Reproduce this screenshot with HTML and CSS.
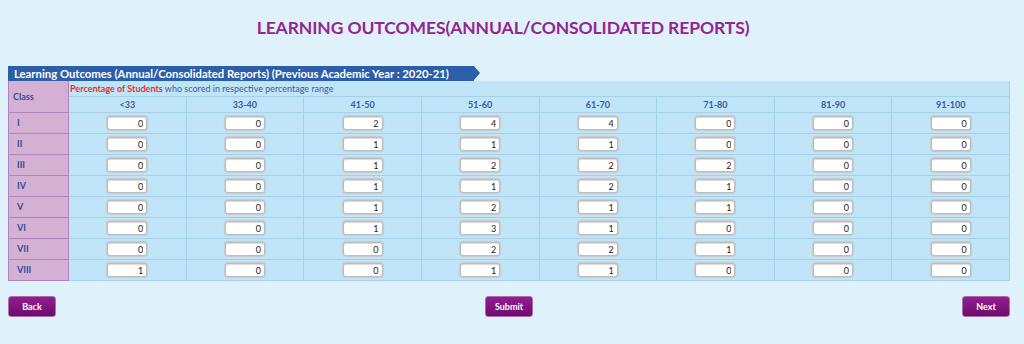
FILE: index.html
```html
<!DOCTYPE html>
<html>
<head>
<meta charset="utf-8">
<link rel="stylesheet" href="styles.css">
</head>
<body>
<div class="page">
  <h1 class="title">LEARNING OUTCOMES(ANNUAL/CONSOLIDATED REPORTS)</h1>
  <div class="ribbon"><span class="ribbon-text">Learning Outcomes (Annual/Consolidated Reports) (Previous Academic Year : 2020-21)</span></div>
  <table class="grid">
    <tr class="r-note">
      <td class="cls cls-head" rowspan="2">Class</td>
      <td class="note" colspan="8"><span class="red">Percentage of Students</span> who scored in respective percentage range</td>
    </tr>
    <tr class="r-head">
      <td>&lt;33</td><td>33-40</td><td>41-50</td><td>51-60</td><td>61-70</td><td>71-80</td><td>81-90</td><td>91-100</td>
    </tr>
    <tr><td class="cls">I</td><td><input class="num" value="0"></td><td><input class="num" value="0"></td><td><input class="num" value="2"></td><td><input class="num" value="4"></td><td><input class="num" value="4"></td><td><input class="num" value="0"></td><td><input class="num" value="0"></td><td><input class="num" value="0"></td></tr>
    <tr><td class="cls">II</td><td><input class="num" value="0"></td><td><input class="num" value="0"></td><td><input class="num" value="1"></td><td><input class="num" value="1"></td><td><input class="num" value="1"></td><td><input class="num" value="0"></td><td><input class="num" value="0"></td><td><input class="num" value="0"></td></tr>
    <tr><td class="cls">III</td><td><input class="num" value="0"></td><td><input class="num" value="0"></td><td><input class="num" value="1"></td><td><input class="num" value="2"></td><td><input class="num" value="2"></td><td><input class="num" value="2"></td><td><input class="num" value="0"></td><td><input class="num" value="0"></td></tr>
    <tr><td class="cls">IV</td><td><input class="num" value="0"></td><td><input class="num" value="0"></td><td><input class="num" value="1"></td><td><input class="num" value="1"></td><td><input class="num" value="2"></td><td><input class="num" value="1"></td><td><input class="num" value="0"></td><td><input class="num" value="0"></td></tr>
    <tr><td class="cls">V</td><td><input class="num" value="0"></td><td><input class="num" value="0"></td><td><input class="num" value="1"></td><td><input class="num" value="2"></td><td><input class="num" value="1"></td><td><input class="num" value="1"></td><td><input class="num" value="0"></td><td><input class="num" value="0"></td></tr>
    <tr><td class="cls">VI</td><td><input class="num" value="0"></td><td><input class="num" value="0"></td><td><input class="num" value="1"></td><td><input class="num" value="3"></td><td><input class="num" value="1"></td><td><input class="num" value="0"></td><td><input class="num" value="0"></td><td><input class="num" value="0"></td></tr>
    <tr><td class="cls">VII</td><td><input class="num" value="0"></td><td><input class="num" value="0"></td><td><input class="num" value="0"></td><td><input class="num" value="2"></td><td><input class="num" value="2"></td><td><input class="num" value="1"></td><td><input class="num" value="0"></td><td><input class="num" value="0"></td></tr>
    <tr><td class="cls">VIII</td><td><input class="num" value="1"></td><td><input class="num" value="0"></td><td><input class="num" value="0"></td><td><input class="num" value="1"></td><td><input class="num" value="1"></td><td><input class="num" value="0"></td><td><input class="num" value="0"></td><td><input class="num" value="0"></td></tr>
  </table>
  <div class="actions">
    <button class="btn">Back</button>
    <button class="btn">Submit</button>
    <button class="btn">Next</button>
  </div>
</div>
</body>
</html>
```
FILE: styles.css
```css
html, body {
  margin: 0;
  padding: 0;
  background: #dff1fb;
}
body {
  font-family: Lato, "Open Sans", sans-serif;
  padding: 0 8px;
}
.page {
  width: 1002px;
}
.title {
  margin: 0;
  padding-top: 16px;
  height: 66px;
  box-sizing: border-box;
  text-align: center;
  font-size: 17.5px;
  font-weight: bold;
  color: #93278f;
  letter-spacing: -0.1px;
  padding-right: 12px;
  line-height: 24px;
}
.ribbon {
  height: 15px;
  width: 466px;
  position: relative;
  background: #2c5ea9;
  color: #fff;
  font-size: 11.3px;
  font-weight: bold;
  line-height: 15px;
  padding-left: 6px;
  box-sizing: border-box;
  white-space: nowrap;
}
.ribbon::after {
  content: "";
  position: absolute;
  right: -6px;
  top: 0;
  border-left: 6px solid #2c5ea9;
  border-top: 7.5px solid transparent;
  border-bottom: 7.5px solid transparent;
}
.grid {
  width: 1002px;
  border-collapse: collapse;
  table-layout: fixed;
  background: #c1e5f8;
  font-size: 9px;
  color: #2d4f9e;
}
.grid td {
  border: 1px solid #a6d1ea;
  padding: 0;
  text-align: center;
  height: 21px;
  box-sizing: border-box;
}
.grid td.cls {
  width: 60px;
  background: #d4b0d3;
  border-color: #b083c4;
  text-align: left;
  padding-left: 8px;
  font-weight: bold;
  font-size: 9px;
  color: #2d4f9e;
}
.grid td.cls-head {
  padding-left: 4px;
  height: auto;
}
.grid tr.r-note td.note {
  height: 15px;
  text-align: left;
  padding-left: 1px;
  font-size: 9px;
  color: #3d5a9c;
  border-top: 0;
}
.grid tr.r-note td.cls {
  border-top: 0;
}
.red {
  color: #f02a2a;
  font-weight: bold;
}
.grid tr.r-head td {
  height: 16px;
  font-weight: bold;
  color: #3a5aa6;
}
.num {
  width: 40px;
  height: 14px;
  box-sizing: border-box;
  border: 1px solid #bdbdbd;
  border-radius: 3px;
  background: #fff;
  box-shadow: inset 0 1px 1px rgba(0,0,0,0.15), 0 0 1px 1px #c9c9c9;
  font-family: Lato, sans-serif;
  font-size: 9px;
  text-align: right;
  padding: 0 3px;
  color: #222;
  vertical-align: middle;
  display: inline-block;
  margin-top: 1px;
}
.actions {
  display: flex;
  justify-content: space-between;
  margin-top: 15px;
}
.btn {
  width: 48px;
  height: 21px;
  border: 1px solid #a56fb0;
  border-radius: 3px;
  background: linear-gradient(#931f8e, #6f0c6c);
  color: #fff;
  font-family: Lato, sans-serif;
  font-weight: bold;
  font-size: 9px;
  padding: 0;
  cursor: pointer;
}
```
